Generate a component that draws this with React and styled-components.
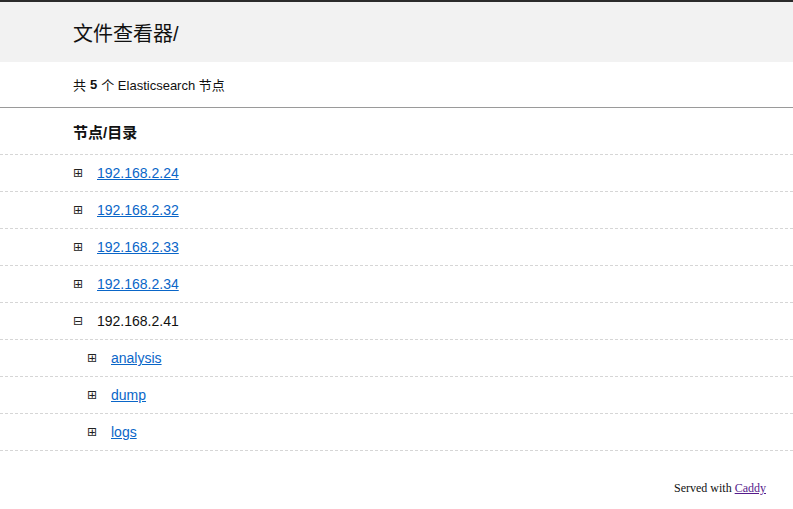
import React from 'react'
import styled, { createGlobalStyle } from 'styled-components'

const Global = createGlobalStyle`
  html, body {
    margin: 0;
    padding: 0;
    background: #fff;
  }
  body {
    font-family: "Liberation Sans", "Noto Sans CJK SC", Arial, sans-serif;
    color: #111;
  }
`

const Page = styled.div`
  width: 793px;
  min-height: 509px;
  display: flex;
  flex-direction: column;
`

const Header = styled.header`
  border-top: 2px solid #2b2b2b;
  background: #f2f2f2;
  height: 60px;
  display: flex;
  align-items: center;
  padding-left: 73px;
`

const Title = styled.h1`
  margin: 0;
  font-size: 20px;
  font-weight: normal;
  color: #111;
`

const Summary = styled.div`
  height: 45px;
  display: flex;
  align-items: center;
  padding-left: 73px;
  font-size: 13px;
  border-bottom: 1px solid #9a9a9a;

  b {
    margin: 0 4px;
  }
`

const SectionTitle = styled.h2`
  margin: 0;
  height: 46px;
  display: flex;
  align-items: center;
  padding-left: 73px;
  font-size: 15px;
  font-weight: bold;
`

const List = styled.ul`
  list-style: none;
  margin: 0;
  padding: 0;
  border-bottom: 1px dashed #d6d6d6;
`

const Row = styled.li`
  height: 36px;
  border-top: 1px dashed #d6d6d6;
  display: flex;
  align-items: center;
  padding-left: ${p => (p.depth ? 87 : 73)}px;
  font-size: 14px;
`

const Toggle = styled.span`
  width: 24px;
  font-size: 12px;
  color: #222;
  font-family: "DejaVu Sans", sans-serif;
`

const NodeLink = styled.a`
  color: #0a66c8;
  text-decoration: underline;
`

const Plain = styled.span`
  color: #111;
`

const Footer = styled.footer`
  display: flex;
  justify-content: flex-end;
  padding: 30px 27px 0 0;
  font-family: "Liberation Serif", "Times New Roman", serif;
  font-size: 12px;
  color: #111;

  a {
    color: #551a8b;
    margin-left: 3px;
  }
`

const nodes = ['192.168.2.24', '192.168.2.32', '192.168.2.33', '192.168.2.34']
const dirs = ['analysis', 'dump', 'logs']

export default function App() {
  return (
    <Page>
      <Global />
      <Header>
        <Title>文件查看器/</Title>
      </Header>
      <Summary>
        共<b>5</b>个 Elasticsearch 节点
      </Summary>
      <SectionTitle>节点/目录</SectionTitle>
      <List>
        {nodes.map(n => (
          <Row key={n}>
            <Toggle>⊞</Toggle>
            <NodeLink href="#">{n}</NodeLink>
          </Row>
        ))}
        <Row>
          <Toggle>⊟</Toggle>
          <Plain>192.168.2.41</Plain>
        </Row>
        {dirs.map(d => (
          <Row key={d} depth={1}>
            <Toggle>⊞</Toggle>
            <NodeLink href="#">{d}</NodeLink>
          </Row>
        ))}
      </List>
      <Footer>
        Served with<a href="#">Caddy</a>
      </Footer>
    </Page>
  )
}
